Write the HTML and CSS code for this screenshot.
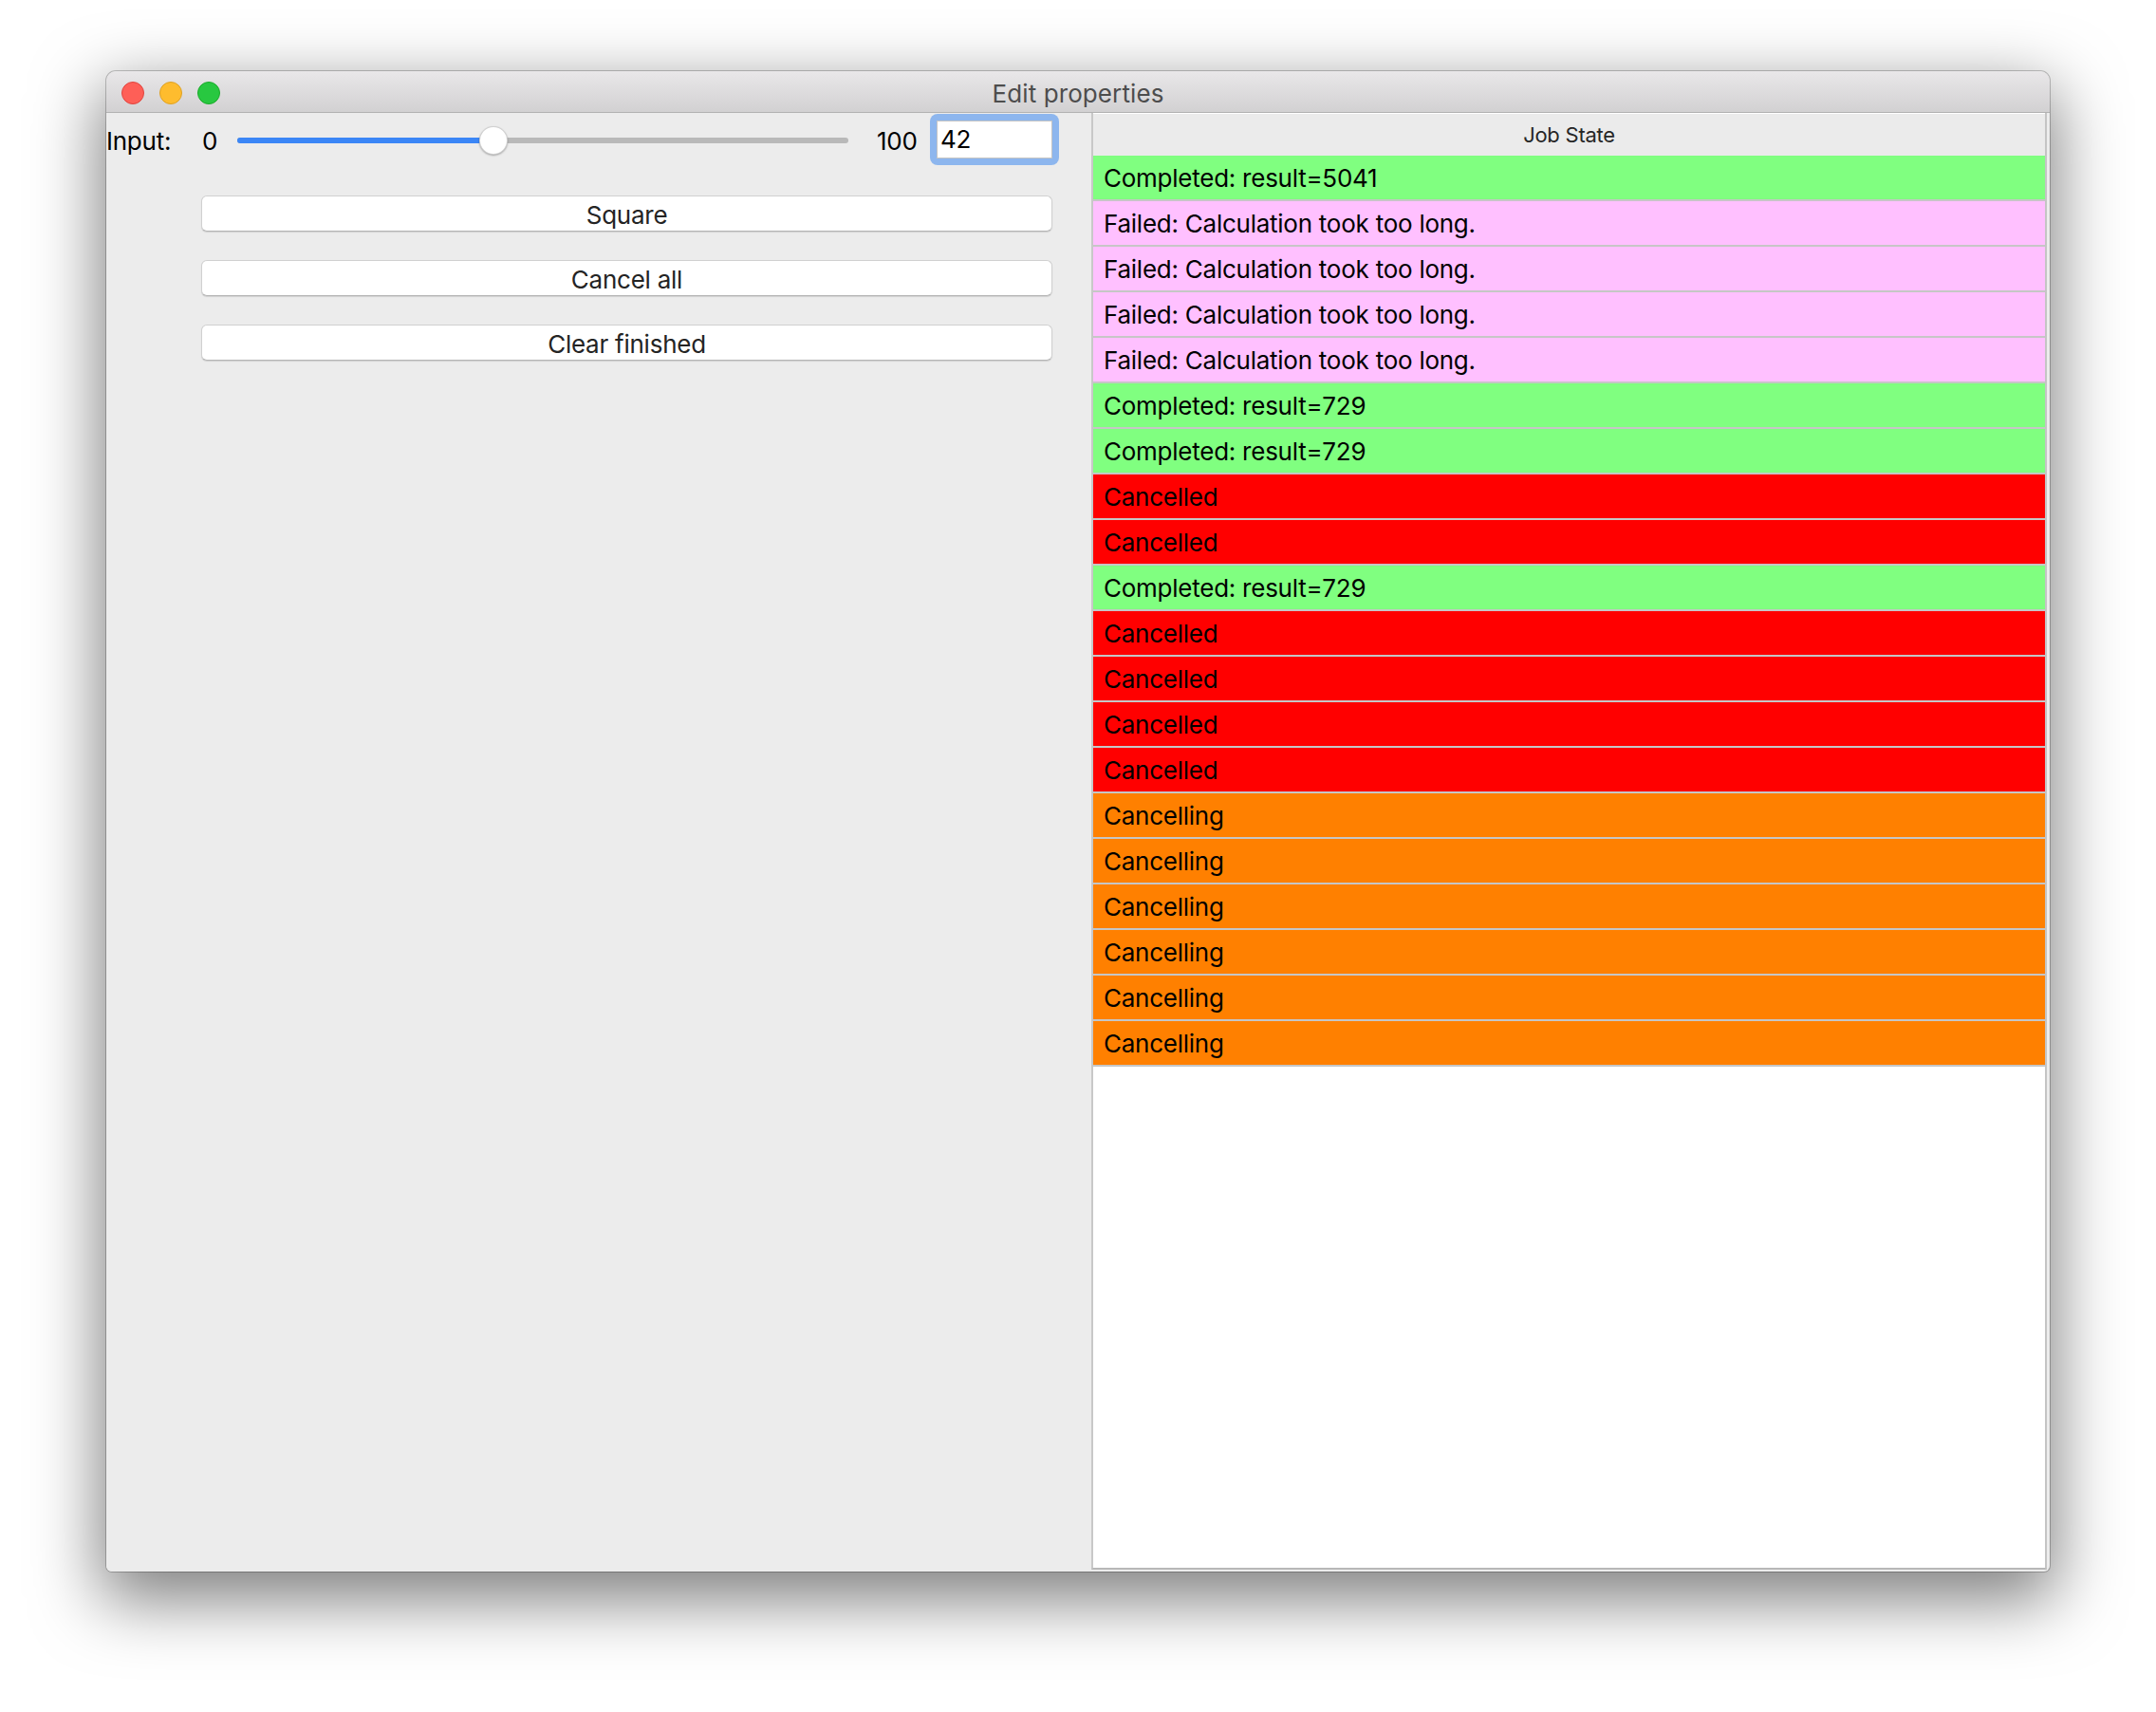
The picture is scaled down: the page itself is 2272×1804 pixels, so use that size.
FILE: index.html
```html
<!DOCTYPE html>
<html>
<head>
<meta charset="utf-8">
<title>Edit properties</title>
<link rel="stylesheet" href="styles.css">
</head>
<body>
<div class="window">
  <div class="titlebar">
    <div class="lights">
      <span class="light red"></span>
      <span class="light yellow"></span>
      <span class="light green"></span>
    </div>
    <div class="title">Edit properties</div>
    <div></div>
  </div>
  <div class="content">
    <div class="left">
      <div class="input-row">
        <div class="lbl">Input:</div>
        <div class="min">0</div>
        <div class="slider">
          <div class="track"></div>
          <div class="fill" style="width:42%"></div>
          <div class="knob" style="left:42%"></div>
        </div>
        <div class="max">100</div>
        <div class="field-ring"><div class="field">42</div></div>
      </div>
      <div class="buttons">
        <div class="btn">Square</div>
        <div class="btn">Cancel all</div>
        <div class="btn">Clear finished</div>
      </div>
    </div>
    <div class="right">
      <div class="table">
        <div class="header"><span>Job State</span></div>
        <div class="row ok">Completed: result=5041</div>
        <div class="row fail">Failed: Calculation took too long.</div>
        <div class="row fail">Failed: Calculation took too long.</div>
        <div class="row fail">Failed: Calculation took too long.</div>
        <div class="row fail">Failed: Calculation took too long.</div>
        <div class="row ok">Completed: result=729</div>
        <div class="row ok">Completed: result=729</div>
        <div class="row cancelled">Cancelled</div>
        <div class="row cancelled">Cancelled</div>
        <div class="row ok">Completed: result=729</div>
        <div class="row cancelled">Cancelled</div>
        <div class="row cancelled">Cancelled</div>
        <div class="row cancelled">Cancelled</div>
        <div class="row cancelled">Cancelled</div>
        <div class="row cancelling">Cancelling</div>
        <div class="row cancelling">Cancelling</div>
        <div class="row cancelling">Cancelling</div>
        <div class="row cancelling">Cancelling</div>
        <div class="row cancelling">Cancelling</div>
        <div class="row cancelling">Cancelling</div>
      </div>
    </div>
  </div>
</div>
</body>
</html>
```
FILE: styles.css
```css
* { box-sizing: border-box; }
html, body { margin: 0; }
body {
  background: #ffffff;
  padding: 75px 0 0 112px;
  font-family: Inter, "Noto Sans", "Liberation Sans", sans-serif;
  letter-spacing: -0.25px;
  width: 2272px;
  height: 1804px;
  overflow: hidden;
}
.window {
  width: 2048px;
  height: 1581px;
  border-radius: 10px 10px 6px 6px;
  background: #ececec;
  box-shadow: 0 0 0 1px rgba(0,0,0,0.22), 0 24px 70px 6px rgba(0,0,0,0.5);
  display: flex;
  flex-direction: column;
  overflow: hidden;
}
.titlebar {
  height: 44px;
  flex: none;
  display: grid;
  grid-template-columns: 1fr auto 1fr;
  align-items: center;
  background: linear-gradient(#e9e7e9, #d2d1d2);
  border-bottom: 1px solid #b2b2b2;
  border-radius: 10px 10px 0 0;
}
.lights {
  display: flex;
  gap: 16px;
  padding-left: 16px;
  align-items: center;
  padding-top: 2px;
}
.light {
  width: 24px;
  height: 24px;
  border-radius: 50%;
  display: block;
}
.light.red { background: #fe5f57; border: 1px solid #e0443e; }
.light.yellow { background: #febc2e; border: 1px solid #dea123; }
.light.green { background: #28c840; border: 1px solid #1aab29; }
.title {
  font-size: 26px;
  color: #4d4d4d;
  letter-spacing: 0.1px;
  padding-top: 4px;
}
.content {
  flex: 1;
  display: flex;
  min-height: 0;
}
.left {
  width: 1038px;
  flex: none;
  background: #ececec;
}
.input-row {
  margin-top: 1px;
  height: 54px;
  display: flex;
  align-items: center;
  font-size: 26px;
  color: #000;
}
.lbl { width: 101px; flex: none; padding-top: 2px; }
.min { width: 37px; flex: none; padding-top: 2px; }
.slider {
  width: 644px;
  height: 30px;
  flex: none;
  position: relative;
  margin-top: 2px;
}
.track {
  position: absolute;
  left: 0; right: 0; top: 12px;
  height: 6px;
  border-radius: 3px;
  background: #b9b9b9;
}
.fill {
  position: absolute;
  left: 0; top: 12px;
  height: 6px;
  border-radius: 3px;
  background: #3b86f6;
}
.knob {
  position: absolute;
  top: 0;
  width: 30px;
  height: 30px;
  margin-left: -15px;
  border-radius: 50%;
  background: #fff;
  border: 1px solid rgba(0,0,0,0.18);
  box-shadow: 0 1px 2px rgba(0,0,0,0.3);
}
.max { width: 86px; flex: none; padding-left: 30px; padding-top: 2px; }
.field-ring {
  flex: none;
  padding: 7px;
  background: #8db6ee;
  border-radius: 8px;
}
.field {
  width: 122px;
  height: 40px;
  background: #fff;
  border: 1px solid #c4c4c4;
  padding-left: 3px;
  line-height: 38px;
  font-size: 26px;
}
.buttons {
  margin-top: 32px;
  margin-left: 100px;
  width: 897px;
  display: flex;
  flex-direction: column;
  gap: 30px;
}
.btn {
  height: 38px;
  background: #fff;
  border-radius: 6px;
  border: 1px solid #d0d0d0;
  border-bottom-color: #b5b5b5;
  box-shadow: 0 1px 1px rgba(0,0,0,0.12);
  font-size: 26px;
  color: #242424;
  text-align: center;
  line-height: 36px;
  padding-top: 2px;
}
.right {
  flex: 1;
  display: flex;
  padding-right: 3px;
  padding-bottom: 2px;
}
.table {
  flex: 1;
  background: #fff;
  border-left: 2px solid #c8c8c8;
  border-right: 2px solid #c4c4c4;
  border-bottom: 2px solid #b8b8b8;
}
.header {
  height: 44px;
  margin-top: 1px;
  background: #ebebeb;
  font-size: 22px;
  color: #262626;
  display: flex;
  align-items: center;
  justify-content: center;
}
.row {
  height: 48px;
  border-bottom: 2px solid #c6c6c6;
  font-size: 26px;
  color: #000;
  padding-left: 11px;
  display: flex;
  align-items: center;
}
.ok { background: #80ff80; }
.fail { background: #ffc0ff; }
.cancelled { background: #ff0000; }
.cancelling { background: #ff8000; }
```
